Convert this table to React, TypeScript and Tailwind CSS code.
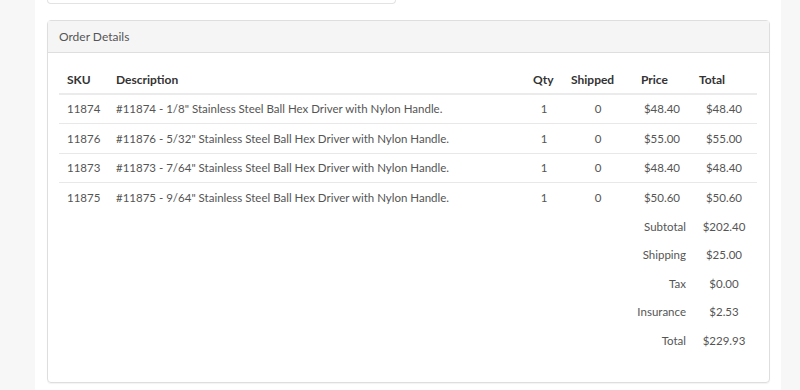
import React from "react";

const items = [
  { sku: "11874", desc: '#11874 - 1/8" Stainless Steel Ball Hex Driver with Nylon Handle.', qty: 1, shipped: 0, price: "$48.40", total: "$48.40" },
  { sku: "11876", desc: '#11876 - 5/32" Stainless Steel Ball Hex Driver with Nylon Handle.', qty: 1, shipped: 0, price: "$55.00", total: "$55.00" },
  { sku: "11873", desc: '#11873 - 7/64" Stainless Steel Ball Hex Driver with Nylon Handle.', qty: 1, shipped: 0, price: "$48.40", total: "$48.40" },
  { sku: "11875", desc: '#11875 - 9/64" Stainless Steel Ball Hex Driver with Nylon Handle.', qty: 1, shipped: 0, price: "$50.60", total: "$50.60" },
];

const summary = [
  { label: "Subtotal", value: "$202.40" },
  { label: "Shipping", value: "$25.00" },
  { label: "Tax", value: "$0.00" },
  { label: "Insurance", value: "$2.53" },
  { label: "Total", value: "$229.93" },
];

export default function App() {
  return (
    <div
      className="flex h-[390px] w-[800px] overflow-hidden bg-[#f7f7f7] text-[11.5px] text-[#555]"
      style={{ fontFamily: "Lato, 'Open Sans', sans-serif" }}
    >
      <div className="ml-[35px] w-[746px] bg-white px-[12px]">
        {/* box above, cut off at the top */}
        <div className="h-[4px] w-[349px] rounded-b border-x border-b border-[#e3e3e3]" />

        {/* Order details panel */}
        <div className="mt-[16px] h-[363px] w-[723px] rounded border border-[#dedede] shadow-[0_1px_1px_rgba(0,0,0,0.05)]">
          <div className="flex h-[32px] items-center border-b border-[#dedede] bg-[#f5f5f5] px-[11px] text-[12px] text-[#555]">
            Order Details
          </div>
          <div className="px-[11px] pt-[14px]">
            <table className="w-[698px] table-fixed border-collapse">
              <colgroup>
                <col className="w-[49px]" />
                <col className="w-[417px]" />
                <col className="w-[38px]" />
                <col className="w-[70px]" />
                <col className="w-[58px]" />
                <col className="w-[66px]" />
              </colgroup>
              <thead>
                <tr className="h-[27px] border-b-2 border-[#ebebeb] text-left text-[12px] font-bold text-[#333]">
                  <th className="px-2">SKU</th>
                  <th className="px-2">Description</th>
                  <th className="px-2">Qty</th>
                  <th className="px-2">Shipped</th>
                  <th className="px-2">Price</th>
                  <th className="px-2">Total</th>
                </tr>
              </thead>
              <tbody>
                {items.map((it, i) => (
                  <tr
                    key={it.sku}
                    className={`h-[29.5px] ${i < items.length - 1 ? "border-b border-[#e8e8e8]" : ""}`}
                  >
                    <td className="px-2">{it.sku}</td>
                    <td className="px-2 whitespace-nowrap">{it.desc}</td>
                    <td className="px-2 text-center">{it.qty}</td>
                    <td className="px-2 text-center">{it.shipped}</td>
                    <td className="px-2 text-center">{it.price}</td>
                    <td className="px-2 text-center">{it.total}</td>
                  </tr>
                ))}
                {summary.map((s) => (
                  <tr key={s.label} className="h-[28.5px]">
                    <td colSpan={4} />
                    <td className="pr-[5px] text-right">{s.label}</td>
                    <td className="px-2 text-center">{s.value}</td>
                  </tr>
                ))}
              </tbody>
            </table>
          </div>
        </div>
      </div>
    </div>
  );
}
